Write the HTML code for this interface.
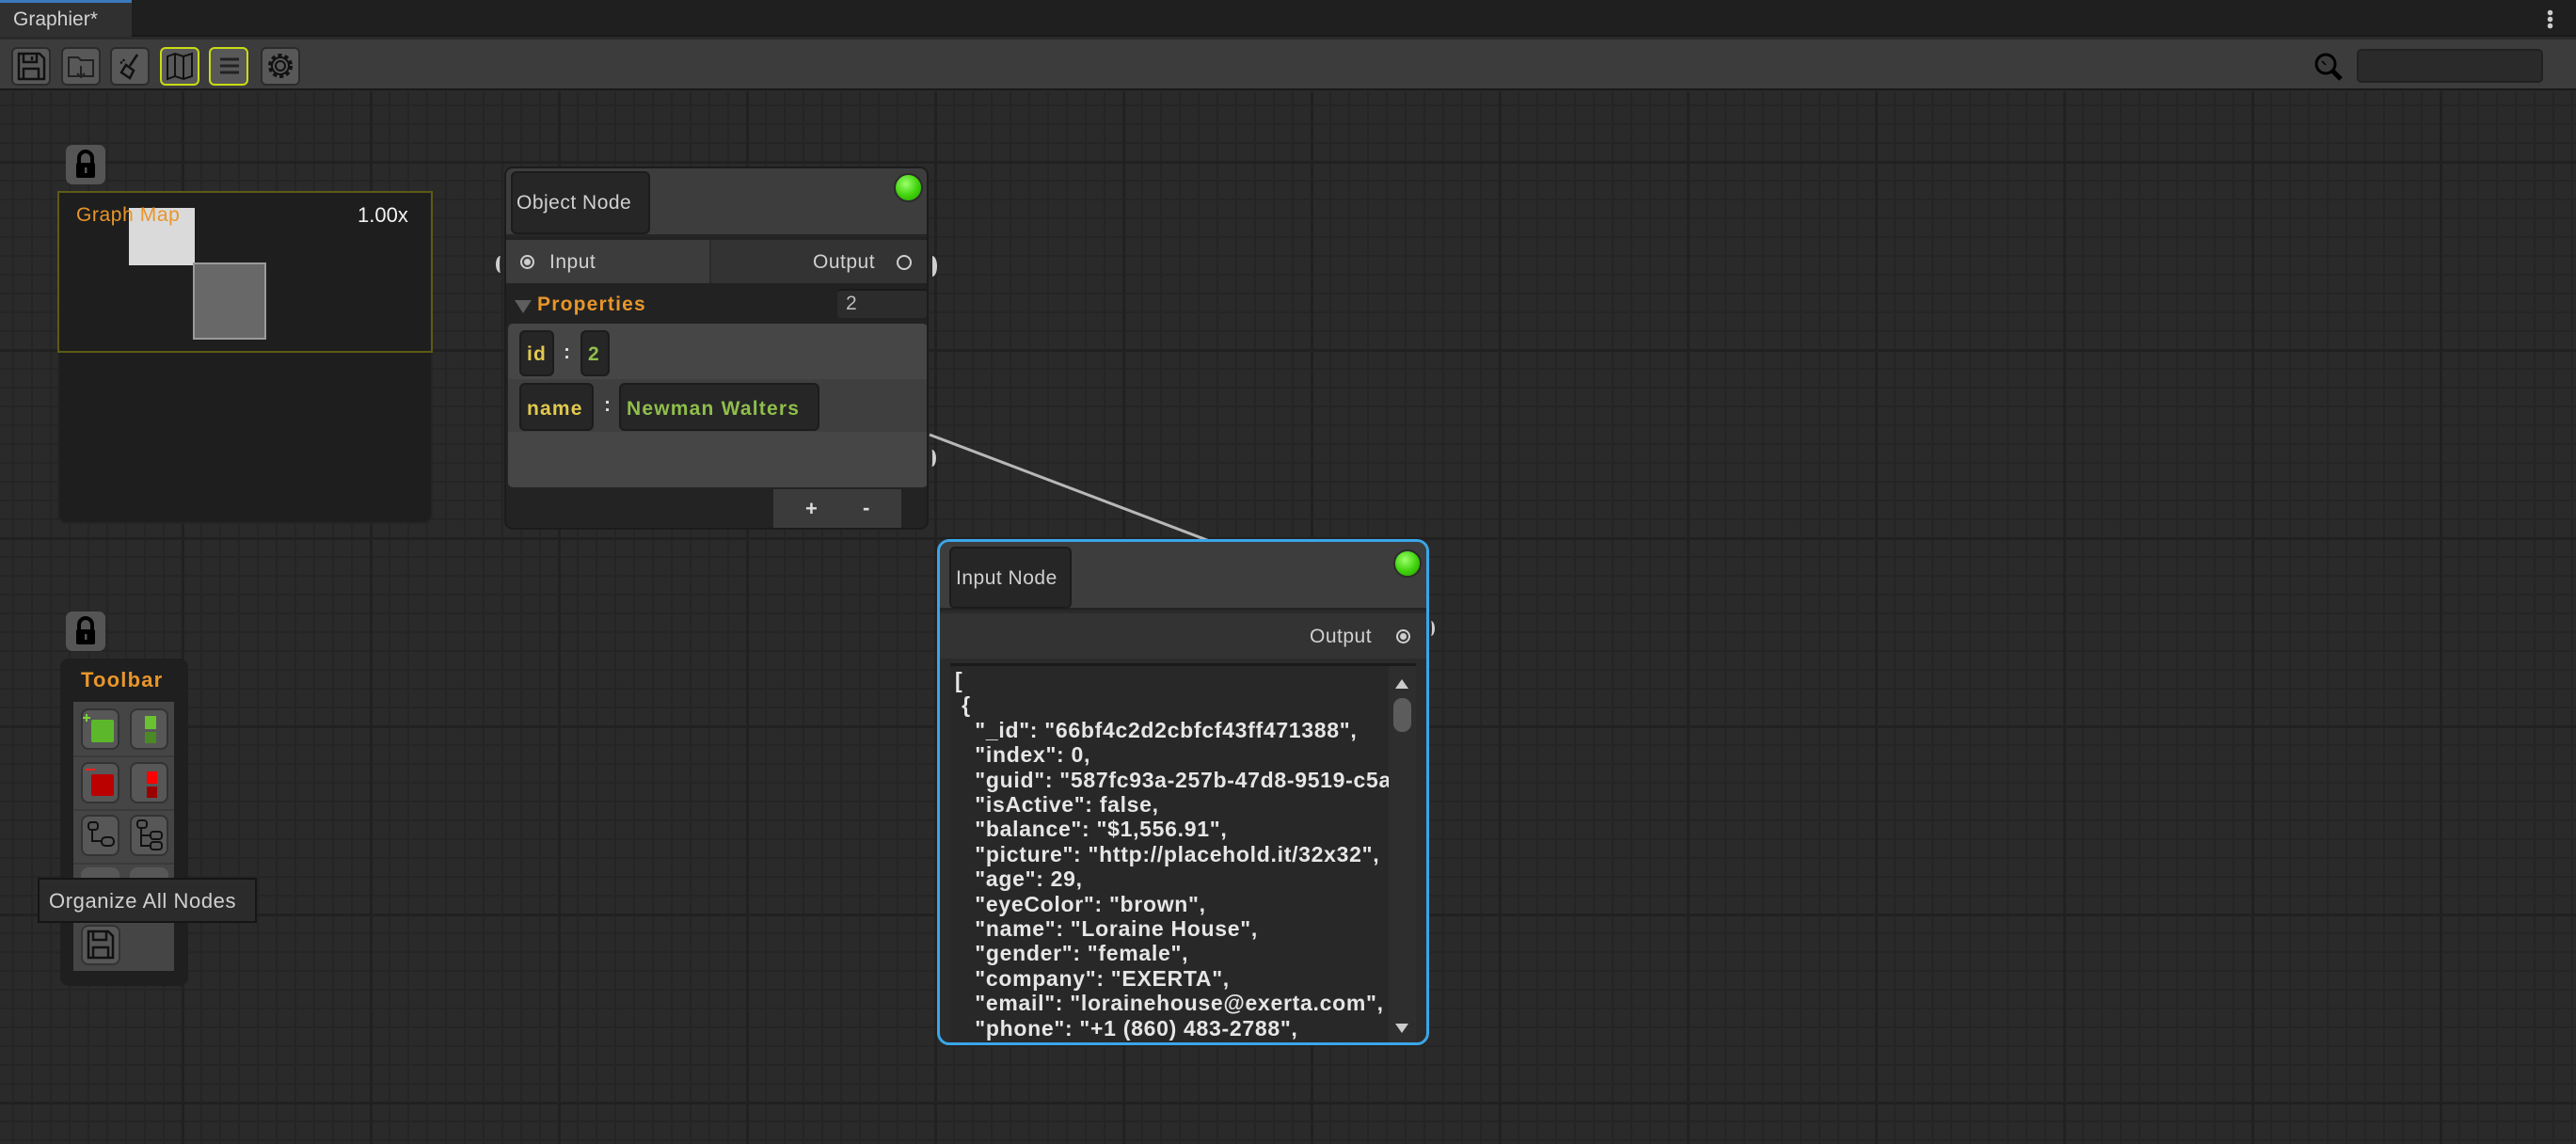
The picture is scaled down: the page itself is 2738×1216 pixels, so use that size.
<!DOCTYPE html>
<html><head><meta charset="utf-8"><style>
*{margin:0;padding:0;box-sizing:border-box}
body{width:2738px;height:1216px;overflow:hidden;background:#2a2a2a;font-family:"Liberation Sans",sans-serif;position:relative}
.a{position:absolute}
#tabbar{left:0;top:0;width:2738px;height:39px;background:#1f1f1f;border-bottom:2px solid #191919}
#tab{left:0;top:0;width:140px;height:39px;background:#303030;border-top:3px solid #3a79bb;color:#d2d2d2;font-size:21px;padding:6px 0 0 14px}
#tb{left:0;top:42px;width:2738px;height:54px;background:#3c3c3c;border-bottom:2px solid #1a1a1a}
.btn{position:absolute;top:8px;width:42px;height:41px;background:#585858;border:2px solid #2b2b2b;border-radius:6px}
.btn.y{border-color:#c8dc14}
#canvas{left:0;top:97px;width:2738px;height:1119px;background-color:#2a2a2a;
background-image:linear-gradient(90deg,#212121 3px,transparent 3px),linear-gradient(#212121 3px,transparent 3px),linear-gradient(90deg,#252525 2px,transparent 2px),linear-gradient(#252525 2px,transparent 2px);
background-size:200px 200px,200px 200px,20px 20px,20px 20px;background-position:-7px 74px,-7px 74px,-7px 74px,-7px 74px}
.lock{width:42px;height:42px;background:#555;border-radius:7px}
.dot{border-radius:50%;background:radial-gradient(circle at 40% 35%,#9cff6a,#3ed10a 55%,#2a9a05);border:2px solid #2c2c2c}
.lbl{color:#d0d0d0;font-size:21px;letter-spacing:0.5px}
.box{position:absolute;background:#262626;border:2px solid #1c1c1c;border-radius:6px}
.bd{font-weight:bold;letter-spacing:1.2px}
pre{font-family:"Liberation Sans",sans-serif;font-weight:bold;color:#e6e6e6;font-size:23px;letter-spacing:0.7px;line-height:26.4px}
</style></head><body>
<div id="tabbar" class="a"></div>
<div id="tab" class="a">Graphier*</div>
<div class="a" style="left:2707px;top:10px;width:7px;height:21px;background:radial-gradient(circle,#ccc 2.5px,transparent 3px) 0 0/7px 7px"></div>
<div id="tb" class="a">
 <div class="btn" style="left:12px"><svg width="38" height="37" viewBox="0 0 38 37"><path d="M6 5h22l5 5v22H6z M11 5v9h14V5 M11 32V21h16v11 M20 8v4" fill="none" stroke="#111" stroke-width="2.5"/></svg></div>
 <div class="btn" style="left:65px"><svg width="38" height="37"><path d="M6 9h10l3 3h13v17H6z M19 18v12 M15 26l4 4 4-4" fill="none" stroke="#222" stroke-width="2"/></svg></div>
 <div class="btn" style="left:117px"><svg width="38" height="37"><path d="M27 6l-8 12 M15 17l8 6-4 8-9-6z M9 14l2 1 M12 11l1 2" fill="none" stroke="#111" stroke-width="2.5"/></svg></div>
 <div class="btn y" style="left:170px"><svg width="38" height="37"><path d="M6 8l8-3 9 3 9-3v24l-9 3-9-3-8 3z M14 5v24 M23 8v24" fill="none" stroke="#111" stroke-width="2"/></svg></div>
 <div class="btn y" style="left:222px"><svg width="40" height="37"><path d="M10 11h20 M10 18h20 M10 25h20" stroke="#222" stroke-width="3"/></svg></div>
 <div class="btn" style="left:277px"><svg width="38" height="37"><circle cx="19" cy="18" r="5" fill="none" stroke="#111" stroke-width="2"/><circle cx="19" cy="18" r="11" fill="none" stroke="#111" stroke-width="4" stroke-dasharray="4 3"/><circle cx="19" cy="18" r="9" fill="none" stroke="#111" stroke-width="2"/></svg></div>
 <svg class="a" style="left:2458px;top:12px" width="36" height="34"><circle cx="14" cy="14" r="10" fill="none" stroke="#000" stroke-width="3"/><path d="M21 21l9 9" stroke="#000" stroke-width="5"/><path d="M10 11l4 4" stroke="#000" stroke-width="1.5"/></svg>
 <div class="a" style="left:2505px;top:10px;width:198px;height:36px;background:#2a2a2a;border:2px solid #212121;border-radius:5px"></div>
</div>
<div id="canvas" class="a"></div>

<!-- Graph map -->
<div class="a lock" style="left:70px;top:154px"><svg width="42" height="42"><path d="M14 19v-5a7 7 0 0 1 14 0v5" fill="none" stroke="#000" stroke-width="4"/><rect x="11" y="19" width="20" height="16" rx="2" fill="#000"/><rect x="20" y="24" width="2.5" height="6" fill="#555"/></svg></div>
<div class="a" style="left:61px;top:203px;width:399px;height:354px;background:#1e1e1e;border-radius:0 0 10px 10px;border:2px solid #252525"></div>
<div class="a" style="left:61px;top:203px;width:399px;height:172px;border:2px solid #5e5a14"></div>
<div class="a" style="left:137px;top:221px;width:70px;height:61px;background:#dadada"></div>
<div class="a" style="left:205px;top:279px;width:78px;height:82px;background:#686868;border:2px solid #9a9a9a"></div>
<div class="a" style="left:81px;top:217px;color:#e8962a;font-size:21px;letter-spacing:0.6px">Graph Map</div>
<div class="a" style="left:380px;top:216px;color:#f2f2f2;font-size:22px">1.00x</div>

<!-- connection line -->
<svg class="a" style="left:0;top:0;pointer-events:none" width="2738" height="1216"><path d="M988 462 L1488 652" stroke="#b8b8b8" stroke-width="3"/></svg>

<!-- Object node -->
<div class="a" style="left:536px;top:177px;width:451px;height:386px;background:#232323;border:2px solid #1c1c1c;border-radius:9px;overflow:hidden">
 <div class="a" style="left:0;top:0;width:451px;height:73px;background:#3d3d3d;border-bottom:3px solid #262626"></div>
 <div class="box" style="left:5px;top:3px;width:148px;height:67px"></div>
 <div class="a lbl" style="left:11px;top:25px">Object Node</div>
 <div class="a dot" style="left:412px;top:5px;width:31px;height:31px"></div>
 <div class="a" style="left:0;top:76px;width:216px;height:46px;background:#3c3c3c"></div>
 <div class="a" style="left:216px;top:76px;width:235px;height:46px;background:#333;border-left:2px solid #2a2a2a"></div>
 <div class="a" style="left:15px;top:92px;width:15px;height:15px;border:2px solid #cfcfcf;border-radius:50%;background:radial-gradient(circle,#cfcfcf 3px,transparent 4px)"></div>
 <div class="a lbl" style="left:46px;top:88px">Input</div>
 <div class="a lbl" style="left:326px;top:88px">Output</div>
 <div class="a" style="left:415px;top:92px;width:16px;height:16px;border:2px solid #cfcfcf;border-radius:50%"></div>
 <div class="a" style="left:0;top:122px;width:451px;height:43px;background:#222"></div>
 <svg class="a" style="left:9px;top:140px" width="18" height="14"><path d="M0 0h18L9 14z" fill="#5e5e5e"/></svg>
 <div class="a bd" style="left:33px;top:133px;color:#e8962a;font-size:21px">Properties</div>
 <div class="a" style="left:352px;top:128px;width:96px;height:31px;background:#2c2c2c;border-top:2px solid #1a1a1a;border-radius:4px;color:#bdbdbd;font-size:21px;padding:2px 0 0 9px">2</div>
 <div class="a" style="left:2px;top:165px;width:446px;height:174px;background:#464646;border-radius:5px"></div>
 <div class="a" style="left:2px;top:224px;width:446px;height:56px;background:#3f3f3f"></div>
 <div class="box bd" style="left:14px;top:172px;width:37px;height:49px;color:#e2c94f;font-size:21px;padding:12px 0 0 6px">id</div>
 <div class="a" style="left:61px;top:184px;color:#ddd;font-size:21px;font-weight:bold">:</div>
 <div class="box bd" style="left:79px;top:172px;width:31px;height:49px;color:#8fbe4b;font-size:21px;padding:12px 0 0 6px">2</div>
 <div class="box bd" style="left:14px;top:228px;width:79px;height:51px;color:#e2c94f;font-size:21px;padding:14px 0 0 6px">name</div>
 <div class="a" style="left:104px;top:240px;color:#ddd;font-size:21px;font-weight:bold">:</div>
 <div class="box bd" style="left:120px;top:228px;width:213px;height:51px;color:#8fbe4b;font-size:21px;padding:14px 0 0 6px">Newman Walters</div>
 <div class="a" style="left:284px;top:341px;width:136px;height:42px;background:#3b3b3b;color:#ddd;font-size:22px;font-weight:bold"><span class="a" style="left:34px;top:8px">+</span><span class="a" style="left:95px;top:7px">-</span></div>
</div>
<div class="a" style="left:527px;top:272px;width:10px;height:18px;border-left:4px solid #cfcfcf;border-radius:50%"></div>
<div class="a" style="left:986px;top:272px;width:10px;height:22px;border-right:5px solid #cfcfcf;border-radius:50%"></div>
<div class="a" style="left:986px;top:478px;width:9px;height:18px;border-right:4px solid #cfcfcf;border-radius:50%"></div>

<!-- Input node -->
<div class="a" style="left:996px;top:573px;width:523px;height:538px;background:#2b2b2b;border:3px solid #3aa6e8;border-radius:13px;overflow:hidden">
 <div class="a" style="left:0;top:0;width:523px;height:73px;background:#3d3d3d;border-bottom:3px solid #252525"></div>
 <div class="box" style="left:10px;top:5px;width:130px;height:66px"></div>
 <div class="a lbl" style="left:17px;top:27px">Input Node</div>
 <div class="a dot" style="left:482px;top:8px;width:30px;height:30px"></div>
 <div class="a" style="left:0;top:76px;width:523px;height:48px;background:#333"></div>
 <div class="a lbl" style="left:393px;top:89px">Output</div>
 <div class="a" style="left:485px;top:93px;width:15px;height:15px;border:2px solid #cfcfcf;border-radius:50%;background:radial-gradient(circle,#cfcfcf 3px,transparent 4px)"></div>
 <div class="a" style="left:11px;top:129px;width:495px;height:410px;background:#282828;border-top:3px solid #1a1a1a;overflow:hidden">
  <pre class="a" style="left:5px;top:2px">[
 {
   "_id": "66bf4c2d2cbfcf43ff471388",
   "index": 0,
   "guid": "587fc93a-257b-47d8-9519-c5a3
   "isActive": false,
   "balance": "$1,556.91",
   "picture": "http://placehold.it/32x32",
   "age": 29,
   "eyeColor": "brown",
   "name": "Loraine House",
   "gender": "female",
   "company": "EXERTA",
   "email": "lorainehouse@exerta.com",
   "phone": "+1 (860) 483-2788",</pre>
  <div class="a" style="left:466px;top:0;width:29px;height:410px;background:#2e2e2e"></div>
  <svg class="a" style="left:473px;top:14px" width="14" height="10"><path d="M7 0L14 10H0z" fill="#ccc"/></svg>
  <div class="a" style="left:471px;top:34px;width:19px;height:36px;background:#5c5c5c;border-radius:9px"></div>
  <svg class="a" style="left:473px;top:380px" width="14" height="10"><path d="M0 0h14L7 10z" fill="#ccc"/></svg>
 </div>
</div>
<div class="a" style="left:1517px;top:660px;width:8px;height:16px;border-right:3px solid #cfcfcf;border-radius:50%"></div>

<!-- Toolbar panel -->
<div class="a lock" style="left:70px;top:650px"><svg width="42" height="42"><path d="M14 19v-5a7 7 0 0 1 14 0v5" fill="none" stroke="#000" stroke-width="4"/><rect x="11" y="19" width="20" height="16" rx="2" fill="#000"/><rect x="20" y="24" width="2.5" height="6" fill="#555"/></svg></div>
<div class="a" style="left:64px;top:700px;width:136px;height:348px;background:#1f1f1f;border-radius:9px"></div>
<div class="a bd" style="left:86px;top:710px;color:#e8962a;font-size:22px">Toolbar</div>
<div class="a" style="left:78px;top:746px;width:107px;height:286px;background:#454545">
 <div class="a" style="left:0;top:57px;width:107px;height:2px;background:#3a3a3a"></div>
 <div class="a" style="left:0;top:114px;width:107px;height:2px;background:#3a3a3a"></div>
 <div class="a" style="left:0;top:171px;width:107px;height:2px;background:#3a3a3a"></div>
</div>
<div class="a" style="left:86px;top:753px;width:41px;height:44px;background:#575757;border:2px solid #333;border-radius:8px"><svg width="37" height="40"><path d="M4 4v8M0 8h8" stroke="#7ad23a" stroke-width="2"/><rect x="9" y="10" width="24" height="24" rx="2" fill="#5cb82a"/></svg></div>
<div class="a" style="left:138px;top:753px;width:41px;height:44px;background:#575757;border:2px solid #333;border-radius:8px"><svg width="37" height="40"><rect x="14" y="6" width="12" height="14" fill="#6ac232"/><rect x="14" y="23" width="12" height="12" fill="#4a8a24"/></svg></div>
<div class="a" style="left:86px;top:810px;width:41px;height:44px;background:#575757;border:2px solid #333;border-radius:8px"><svg width="37" height="40"><path d="M3 6h10" stroke="#e22" stroke-width="2"/><rect x="9" y="11" width="24" height="23" rx="2" fill="#b00"/></svg></div>
<div class="a" style="left:138px;top:810px;width:41px;height:44px;background:#575757;border:2px solid #333;border-radius:8px"><svg width="37" height="40"><rect x="16" y="8" width="11" height="13" fill="#f00"/><rect x="16" y="24" width="11" height="12" fill="#900"/></svg></div>
<div class="a" style="left:86px;top:866px;width:41px;height:44px;background:#575757;border:2px solid #333;border-radius:8px"><svg width="37" height="40"><rect x="6" y="6" width="10" height="8" rx="3" fill="none" stroke="#111" stroke-width="2"/><rect x="20" y="22" width="13" height="9" rx="4" fill="none" stroke="#111" stroke-width="2"/><path d="M10 14v12h10" fill="none" stroke="#111" stroke-width="2"/></svg></div>
<div class="a" style="left:138px;top:866px;width:41px;height:44px;background:#575757;border:2px solid #333;border-radius:8px"><svg width="37" height="40"><rect x="6" y="4" width="10" height="8" rx="3" fill="none" stroke="#111" stroke-width="2"/><rect x="20" y="16" width="12" height="8" rx="3" fill="none" stroke="#111" stroke-width="2"/><rect x="20" y="27" width="12" height="8" rx="3" fill="none" stroke="#111" stroke-width="2"/><path d="M10 12v19h10M10 20h10" fill="none" stroke="#111" stroke-width="2"/></svg></div>
<div class="a" style="left:86px;top:922px;width:41px;height:20px;background:#575757;border-radius:8px 8px 0 0"></div>
<div class="a" style="left:138px;top:922px;width:41px;height:20px;background:#575757;border-radius:8px 8px 0 0"></div>
<div class="a" style="left:86px;top:983px;width:42px;height:43px;background:#575757;border:2px solid #333;border-radius:8px"><svg width="38" height="39"><path d="M6 5h21l5 5v23H6z M11 5v9h14V5 M11 33V22h16v11" fill="none" stroke="#111" stroke-width="2.5"/></svg></div>
<div class="a" style="left:40px;top:933px;width:233px;height:48px;background:#2b2b2b;border:2px solid #151515;color:#d0d0d0;font-size:22px;letter-spacing:0.6px;padding:10px 0 0 10px">Organize All Nodes</div>
</body></html>
